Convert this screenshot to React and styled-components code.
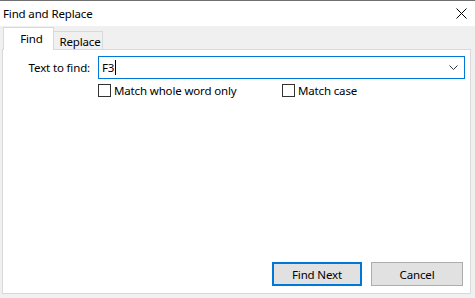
import React from "react";
import styled, { createGlobalStyle } from "styled-components";

const GlobalStyle = createGlobalStyle`
  html, body {
    margin: 0;
    padding: 0;
    background: #f0f0f0;
  }
  body {
    font-family: "Noto Sans", "Open Sans", sans-serif;
    font-size: 11.5px;
    letter-spacing: -0.15px;
    color: #000;
  }
`;

const Window = styled.div`
  width: 475px;
  height: 298px;
  box-sizing: border-box;
  border-top: 1px solid #707070;
  display: flex;
  flex-direction: column;
  background: #f0f0f0;
`;

const TitleBar = styled.div`
  height: 25px;
  flex: none;
  background: #fff;
  display: flex;
  align-items: center;
  justify-content: space-between;
  padding: 0 8px 0 3px;
`;

const Title = styled.span`
  font-size: 11.5px;
`;

const CloseButton = styled.div`
  width: 12px;
  height: 12px;
  display: flex;
  align-items: center;
  justify-content: center;
`;

const Body = styled.div`
  flex: 1;
  display: flex;
  flex-direction: column;
  padding: 2px 4px 4px 2px;
`;

const TabRow = styled.div`
  display: flex;
  align-items: flex-end;
  height: 22px;
  padding-left: 1px;
  position: relative;
  z-index: 1;
  margin-bottom: -1px;
`;

const Tab = styled.div`
  box-sizing: border-box;
  height: ${(p) => (p.active ? "23px" : "19px")};
  width: ${(p) => p.width}px;
  display: flex;
  align-items: center;
  justify-content: center;
  background: ${(p) => (p.active ? "#fff" : "#f0f0f0")};
  border: 1px solid #d9d9d9;
  border-bottom: ${(p) => (p.active ? "none" : "1px solid #d9d9d9")};
  margin-left: ${(p) => (p.active ? "0" : "-1px")};
  padding: ${(p) => (p.active ? "0 0 2px 6px" : "1px 0 0 4px")};
`;

const Panel = styled.div`
  flex: 1;
  background: #fff;
  border: 1px solid #d9d9d9;
  display: flex;
  flex-direction: column;
  padding: 6px 5px 7px 0;
`;

const FormGrid = styled.div`
  display: grid;
  grid-template-columns: 87px 1fr;
  column-gap: 8px;
  row-gap: 4px;
  align-items: center;
`;

const Label = styled.label`
  text-align: right;
`;

const Combo = styled.div`
  box-sizing: border-box;
  height: 23px;
  border: 1px solid #0078d7;
  display: flex;
  align-items: center;
  justify-content: space-between;
  padding: 0 6px 0 3px;
`;

const ComboText = styled.span`
  display: flex;
  align-items: center;
`;

const Caret = styled.span`
  display: inline-block;
  width: 1px;
  height: 15px;
  background: #000;
  margin-left: 1px;
`;

const Options = styled.div`
  display: flex;
`;

const Check = styled.label`
  display: flex;
  align-items: center;
  gap: 3px;
  width: ${(p) => p.width}px;
`;

const Box = styled.span`
  box-sizing: border-box;
  width: 13px;
  height: 13px;
  border: 1px solid #333;
  background: #fff;
`;

const ButtonRow = styled.div`
  margin-top: auto;
  display: flex;
  justify-content: flex-end;
  gap: 9px;
  padding-right: 2px;
`;

const Button = styled.div`
  box-sizing: border-box;
  width: ${(p) => p.width}px;
  height: 24px;
  display: flex;
  align-items: center;
  justify-content: center;
  background: #e1e1e1;
  border: ${(p) => (p.primary ? "2px solid #0078d7" : "1px solid #adadad")};
`;

export default function App() {
  return (
    <>
      <GlobalStyle />
      <Window>
        <TitleBar>
          <Title>Find and Replace</Title>
          <CloseButton>
            <svg width="11" height="11" viewBox="0 0 11 11">
              <path d="M0.5 0.5 L10.5 10.5 M10.5 0.5 L0.5 10.5" stroke="#000" strokeWidth="1" />
            </svg>
          </CloseButton>
        </TitleBar>
        <Body>
          <TabRow>
            <Tab active width={51}>Find</Tab>
            <Tab width={50}>Replace</Tab>
          </TabRow>
          <Panel>
            <FormGrid>
              <Label>Text to find:</Label>
              <Combo>
                <ComboText>
                  F3<Caret />
                </ComboText>
                <svg width="9" height="5" viewBox="0 0 9 5">
                  <path d="M0.5 0.5 L4.5 4.5 L8.5 0.5" stroke="#333" fill="none" strokeWidth="1" />
                </svg>
              </Combo>
              <span />
              <Options>
                <Check width={184}>
                  <Box />
                  Match whole word only
                </Check>
                <Check width={100}>
                  <Box />
                  Match case
                </Check>
              </Options>
            </FormGrid>
            <ButtonRow>
              <Button primary width={90}>Find Next</Button>
              <Button width={92}>Cancel</Button>
            </ButtonRow>
          </Panel>
        </Body>
      </Window>
    </>
  );
}
